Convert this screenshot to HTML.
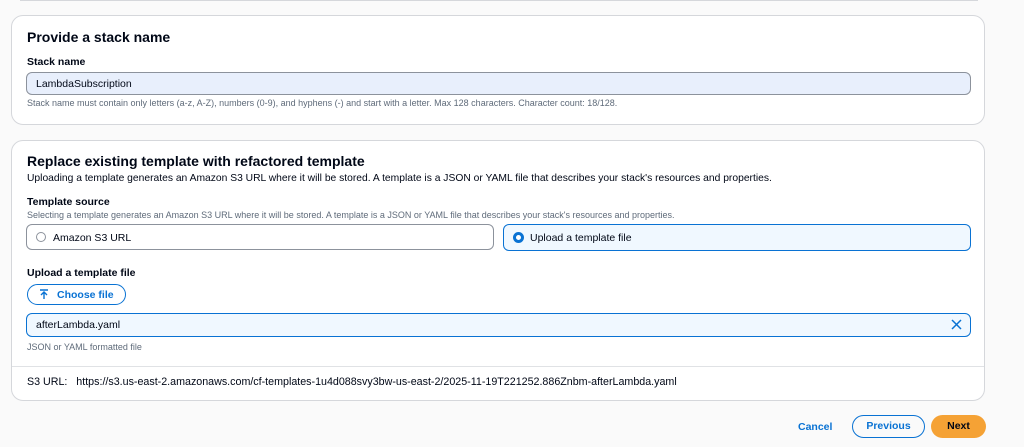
<!DOCTYPE html>
<html><head><style>
body{margin:0;width:1024px;height:447px;background:#fafafa;font-family:"Liberation Sans",sans-serif;color:#000716;position:relative;overflow:hidden}
.a{position:absolute}
.card{position:absolute;left:11px;width:974px;background:#fff;border:1px solid #d5d7db;border-radius:12px;box-sizing:border-box}
.t{font-weight:bold;white-space:nowrap}
.h{font-size:9px;color:#5f6b7a;white-space:nowrap}
</style></head><body>
<div class="a" style="left:20px;top:0;width:958px;height:1px;background:#d5d7db"></div>
<div class="card" style="top:15px;height:110px"></div>
<div class="a t" style="left:27px;top:29px;font-size:14px">Provide a stack name</div>
<div class="a t" style="left:27px;top:56px;font-size:10.5px">Stack name</div>
<div class="a" style="left:26px;top:72px;width:945px;height:23px;box-sizing:border-box;background:#e8effc;border:1px solid #8c929c;border-radius:6px;font-size:10.5px;padding:5px 0 0 9px">LambdaSubscription</div>
<div class="a h" style="left:27px;top:98px">Stack name must contain only letters (a-z, A-Z), numbers (0-9), and hyphens (-) and start with a letter. Max 128 characters. Character count: 18/128.</div>

<div class="card" style="top:140px;height:261px"></div>
<div class="a t" style="left:27px;top:153px;font-size:14px">Replace existing template with refactored template</div>
<div class="a" style="left:27px;top:173px;font-size:10.3px;white-space:nowrap;color:#000716">Uploading a template generates an Amazon S3 URL where it will be stored. A template is a JSON or YAML file that describes your stack's resources and properties.</div>
<div class="a t" style="left:27px;top:196px;font-size:10.5px">Template source</div>
<div class="a h" style="left:27px;top:210px">Selecting a template generates an Amazon S3 URL where it will be stored. A template is a JSON or YAML file that describes your stack's resources and properties.</div>
<div class="a" style="left:26px;top:224px;width:468px;height:26px;box-sizing:border-box;border:1px solid #8c929c;border-radius:6px"></div>
<div class="a" style="left:36px;top:232px;width:10px;height:10px;box-sizing:border-box;border:1px solid #8c929c;border-radius:50%"></div>
<div class="a" style="left:53px;top:232px;font-size:10.5px;white-space:nowrap">Amazon S3 URL</div>
<div class="a" style="left:503px;top:224px;width:468px;height:27px;box-sizing:border-box;border:1.5px solid #0972d3;border-radius:6px;background:#f0f8ff"></div>
<div class="a" style="left:513px;top:232px;width:11px;height:11px;box-sizing:border-box;border:3.5px solid #0972d3;border-radius:50%;background:#fff"></div>
<div class="a" style="left:530px;top:232px;font-size:10.5px;white-space:nowrap">Upload a template file</div>
<div class="a t" style="left:27px;top:267px;font-size:10.5px">Upload a template file</div>
<div class="a" style="left:27px;top:284px;width:99px;height:21px;box-sizing:border-box;border:1.5px solid #0972d3;border-radius:11px;color:#0972d3;font-weight:bold;font-size:10.5px;padding:4px 0 0 29px">Choose file</div>
<svg class="a" style="left:39px;top:289px" width="10" height="11" viewBox="0 0 10 11"><path d="M1 1H9M5 10V3M2 6L5 3L8 6" stroke="#0972d3" stroke-width="1.4" fill="none"/></svg>
<div class="a" style="left:26px;top:313px;width:945px;height:24px;box-sizing:border-box;border:1.5px solid #0972d3;border-radius:6px;background:#f0f8ff;font-size:10.5px;padding:5px 0 0 9px">afterLambda.yaml</div>
<svg class="a" style="left:951px;top:319px" width="11" height="11" viewBox="0 0 11 11"><path d="M1 1L10 10M10 1L1 10" stroke="#0972d3" stroke-width="1.5"/></svg>
<div class="a h" style="left:27px;top:342px">JSON or YAML formatted file</div>
<div class="a" style="left:12px;top:366px;width:972px;height:1px;background:#e0e2e5"></div>
<div class="a" style="left:27px;top:376px;font-size:10.7px;white-space:nowrap">S3 URL:&nbsp;&nbsp; https://s3.us-east-2.amazonaws.com/cf-templates-1u4d088svy3bw-us-east-2/2025-11-19T221252.886Znbm-afterLambda.yaml</div>

<div class="a t" style="left:798px;top:421px;font-size:10.5px;color:#0972d3">Cancel</div>
<div class="a t" style="left:852px;top:415px;width:73px;height:23px;box-sizing:border-box;border:1.5px solid #0972d3;border-radius:12px;color:#0972d3;font-size:10.5px;text-align:center;line-height:20px">Previous</div>
<div class="a t" style="left:931px;top:415px;width:55px;height:23px;background:#f5a235;border-radius:12px;font-size:10.5px;text-align:center;line-height:23px">Next</div>
</body></html>
